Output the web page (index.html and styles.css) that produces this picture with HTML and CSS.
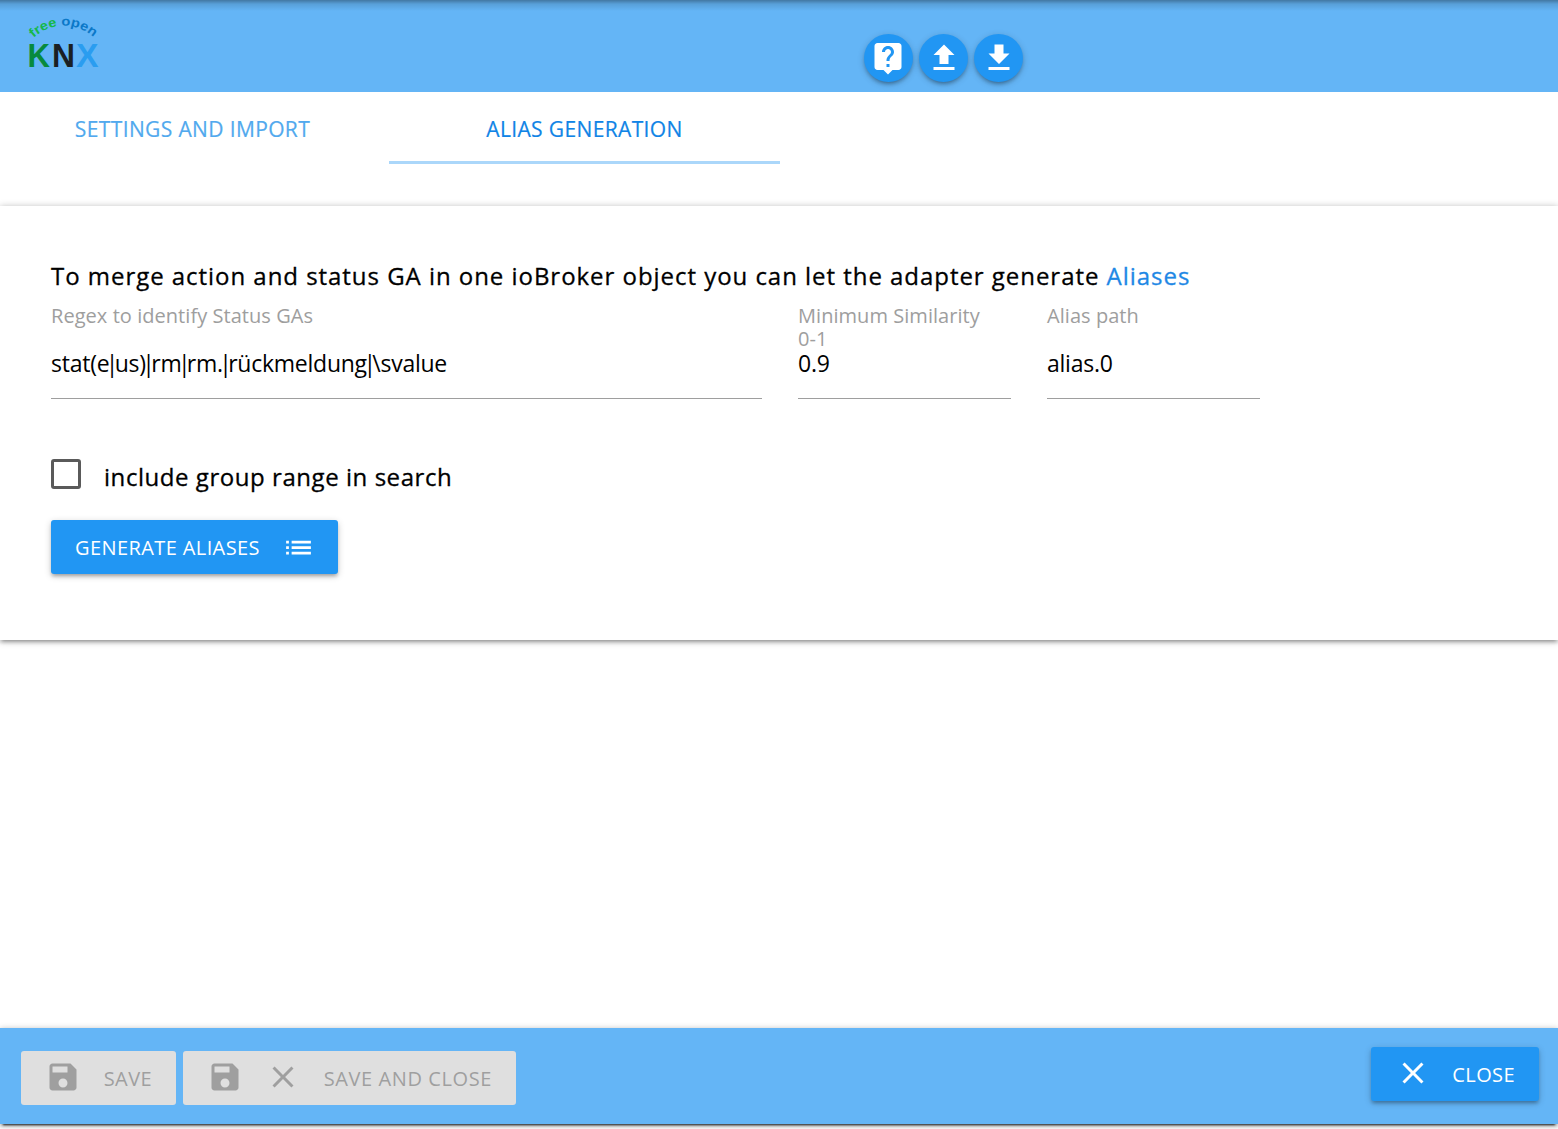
FILE: index.html
```html
<!DOCTYPE html>
<html lang="en">
<head>
<meta charset="utf-8">
<title>KNX adapter settings</title>
<link rel="stylesheet" href="styles.css">
</head>
<body>
<header class="topbar">
  <svg class="logo" viewBox="0 0 80 60" role="img" aria-label="free open KNX">
    <path id="arc" d="M7.500 25 A44 44 0 0 1 68.500 25" fill="none"/>
    <text class="logo-arc"><textPath href="#arc" textLength="66" lengthAdjust="spacingAndGlyphs"><tspan fill="#14b84a">free</tspan> <tspan fill="#0b78c8">open</tspan></textPath></text>
    <g class="logo-name"><text x="1.500" y="54" fill="#078a3e" textLength="22.500" lengthAdjust="spacingAndGlyphs">K</text><text x="26" y="54" fill="#1a1f24" textLength="23" lengthAdjust="spacingAndGlyphs">N</text><text x="50" y="54" fill="#2a9df0" textLength="22.500" lengthAdjust="spacingAndGlyphs">X</text></g>
  </svg>
  <nav class="tools">
    <button class="round help" aria-label="Help"><svg class="icon" viewBox="0 0 24 24"><path d="M19 2H5c-1.110 0-2 .9-2 2v14c0 1.100.89 2 2 2h4l3 3 3-3h4c1.100 0 2-.9 2-2V4c0-1.100-.9-2-2-2zm-6 16h-2v-2h2v2zm2.070-7.750l-.9.920C13.450 11.900 13 12.500 13 14h-2v-.5c0-1.100.45-2.100 1.170-2.830l1.240-1.260c.37-.36.59-.86.59-1.410 0-1.100-.9-2-2-2s-2 .9-2 2H8c0-2.210 1.790-4 4-4s4 1.790 4 4c0 .88-.36 1.680-.93 2.250z"/></svg></button>
    <button class="round" aria-label="Upload"><svg class="icon" viewBox="0 0 24 24"><path d="M9 16h6v-6h4l-7-7-7 7h4zm-4 2h14v2H5z"/></svg></button>
    <button class="round" aria-label="Download"><svg class="icon" viewBox="0 0 24 24"><path d="M19 9h-4V3H9v6H5l7 7 7-7zM5 18v2h14v-2H5z"/></svg></button>
  </nav>
</header>
<nav class="tabs">
  <a class="tab">SETTINGS AND IMPORT</a>
  <a class="tab active">ALIAS GENERATION</a>
</nav>
<main class="panel">
  <h1 class="title">To merge action and status GA in one ioBroker object you can let the adapter generate <a class="link">Aliases</a></h1>
  <div class="fields">
    <div class="field wide"><label class="label">Regex to identify Status GAs</label><div class="value">stat(e<span class="pipe">|</span>us)<span class="pipe">|</span>rm<span class="pipe">|</span>rm.<span class="pipe">|</span>rückmeldung<span class="pipe">|</span>\svalue</div></div>
    <div class="field"><label class="label">Minimum Similarity<br>0-1</label><div class="value">0.9</div></div>
    <div class="field"><label class="label">Alias path</label><div class="value">alias.0</div></div>
  </div>
  <label class="check"><span class="box"></span><span class="check-text">include group range in search</span></label>
  <button class="btn generate"><span>GENERATE ALIASES</span><svg class="icon list" viewBox="0 0 24 24"><path d="M3 13h2v-2H3v2zm0 4h2v-2H3v2zm0-8h2V7H3v2zm4 4h14v-2H7v2zm0 4h14v-2H7v2zM7 7v2h14V7H7z"/></svg></button>
</main>
<footer class="bottombar">
  <button class="btn disabled save"><svg class="icon" viewBox="0 0 24 24"><path d="M17 3H5c-1.110 0-2 .9-2 2v14c0 1.100.89 2 2 2h14c1.100 0 2-.9 2-2V7l-4-4zm-5 16c-1.660 0-3-1.340-3-3s1.340-3 3-3 3 1.340 3 3-1.340 3-3 3zm3-10H5V5h10v4z"/></svg><span>SAVE</span></button>
  <button class="btn disabled save-close"><svg class="icon" viewBox="0 0 24 24"><path d="M17 3H5c-1.110 0-2 .9-2 2v14c0 1.100.89 2 2 2h14c1.100 0 2-.9 2-2V7l-4-4zm-5 16c-1.660 0-3-1.340-3-3s1.340-3 3-3 3 1.340 3 3-1.340 3-3 3zm3-10H5V5h10v4z"/></svg><svg class="icon" viewBox="0 0 24 24"><path d="M19 6.410L17.590 5 12 10.590 6.410 5 5 6.410 10.590 12 5 17.590 6.410 19 12 13.410 17.590 19 19 17.590 13.410 12z"/></svg><span>SAVE AND CLOSE</span></button>
  <button class="btn close"><svg class="icon" viewBox="0 0 24 24"><path d="M19 6.410L17.590 5 12 10.590 6.410 5 5 6.410 10.590 12 5 17.590 6.410 19 12 13.410 17.590 19 19 17.590 13.410 12z"/></svg><span>CLOSE</span></button>
</footer>
</body>
</html>
```
FILE: styles.css
```css
* { box-sizing: border-box; }
body {
  margin: 0;
  height: 1129px;
  overflow: hidden;
  display: flex;
  flex-direction: column;
  background: #fff;
  color: #000;
  font-family: "Open Sans", "Noto Sans", sans-serif;
  white-space: nowrap;
}
button { border: 0; padding: 0; font: inherit; color: inherit; }
.icon { width: 36px; height: 36px; flex: none; fill: currentColor; display: block; }
.topbar {
  height: 92px;
  flex: none;
  display: flex;
  background: linear-gradient(rgba(0, 0, 0, .34), rgba(0, 0, 0, .12) 4px, transparent 11px) #64b5f6;
}
.logo { width: 80px; height: 60px; margin: 13px 0 0 26px; overflow: visible; }
.logo-arc { font: bold 13px "Liberation Sans", sans-serif; }
.logo-name { font: bold 34px "Liberation Sans", sans-serif; }
.tools { display: flex; gap: 6px; margin: 34px 0 0 758px; }
.round {
  width: 49px;
  height: 48px;
  border-radius: 50%;
  display: flex;
  align-items: center;
  justify-content: center;
  padding: 0;
  background: #2196f3;
  color: #fff;
  box-shadow: 0 3px 3px rgba(0, 0, 0, .14), 0 4px 2px -3px rgba(0, 0, 0, .12), 0 2px 7px rgba(0, 0, 0, .2);
}
.help { padding-right: 1px; }
.tabs { height: 114px; flex: none; display: flex; }
.tab {
  width: 389px;
  height: 72px;
  display: flex;
  justify-content: center;
  color: #51a9ee;
  font-size: 21px;
  line-height: 75px;
  letter-spacing: .37px;
  padding-right: 4px;
  -webkit-text-stroke: .2px;
}
.tab.active { width: 391px; padding: 0; color: #1084e6; border-bottom: 3px solid #abd7fa; }
.panel {
  height: 434px;
  flex: none;
  padding: 51px 51px 0;
  box-shadow: 0 3px 3px rgba(0, 0, 0, .14), 0 4px 2px -3px rgba(0, 0, 0, .12), 0 1px 7px rgba(0, 0, 0, .3);
}
.title { margin: 0; height: 47px; font-size: 24px; line-height: 38px; font-weight: 400; letter-spacing: .96px; -webkit-text-stroke: .3px; }
.link { color: #1e88e5; }
.fields { display: flex; gap: 36px; height: 95px; }
.field { width: 213px; height: 95px; display: flex; flex-direction: column; justify-content: space-between; border-bottom: 1px solid #9e9e9e; }
.field.wide { width: 711px; }
.label { height: 46px; font-size: 20px; line-height: 23px; color: #9e9e9e; letter-spacing: .05px; }
.value { height: 47px; font-size: 23px; line-height: 24px; letter-spacing: -.25px; }
.pipe { margin: 0 -3.5px; }
.check { height: 38px; margin-top: 53px; display: flex; align-items: flex-start; padding-top: 7px; gap: 23px; }
.box { width: 30px; height: 30px; border: 3px solid #5a5a5a; border-radius: 3px; }
.check-text { font-size: 24px; line-height: 36px; letter-spacing: .55px; -webkit-text-stroke: .3px; }
.btn {
  height: 54px;
  display: flex;
  align-items: center;
  justify-content: space-between;
  border-radius: 3px;
  padding: 0 24px;
  background: #2196f3;
  color: #fff;
  font-size: 20px;
  line-height: 54px;
  letter-spacing: .4px;
  box-shadow: 0 3px 3px rgba(0, 0, 0, .14), 0 4px 2px -3px rgba(0, 0, 0, .12), 0 2px 7px rgba(0, 0, 0, .2);
}
.generate { width: 287px; margin-top: 30px; }
.list { width: 33px; height: 33px; margin: 1px -1px 0 0; }
.bottombar {
  height: 96px;
  flex: none;
  margin-top: 388px;
  display: flex;
  align-items: flex-start;
  padding: 23px 19px 0 21px;
  gap: 7px;
  background: #64b5f6;
  box-shadow: 0 3px 3px rgba(0, 0, 0, .14), 0 4px 2px -3px rgba(0, 0, 0, .8), 0 1px 6px rgba(0, 0, 0, .3);
}
.disabled { background: #dfdfdf; color: #9f9f9f; box-shadow: none; }
.disabled .icon { margin-top: -3px; }
.save { width: 155px; }
.save-close { width: 333px; letter-spacing: .6px; }
.close { width: 168px; margin: -4px 0 0 auto; }
.close .icon { margin-top: -2px; }
.btn span { padding-top: 1px; }
```
